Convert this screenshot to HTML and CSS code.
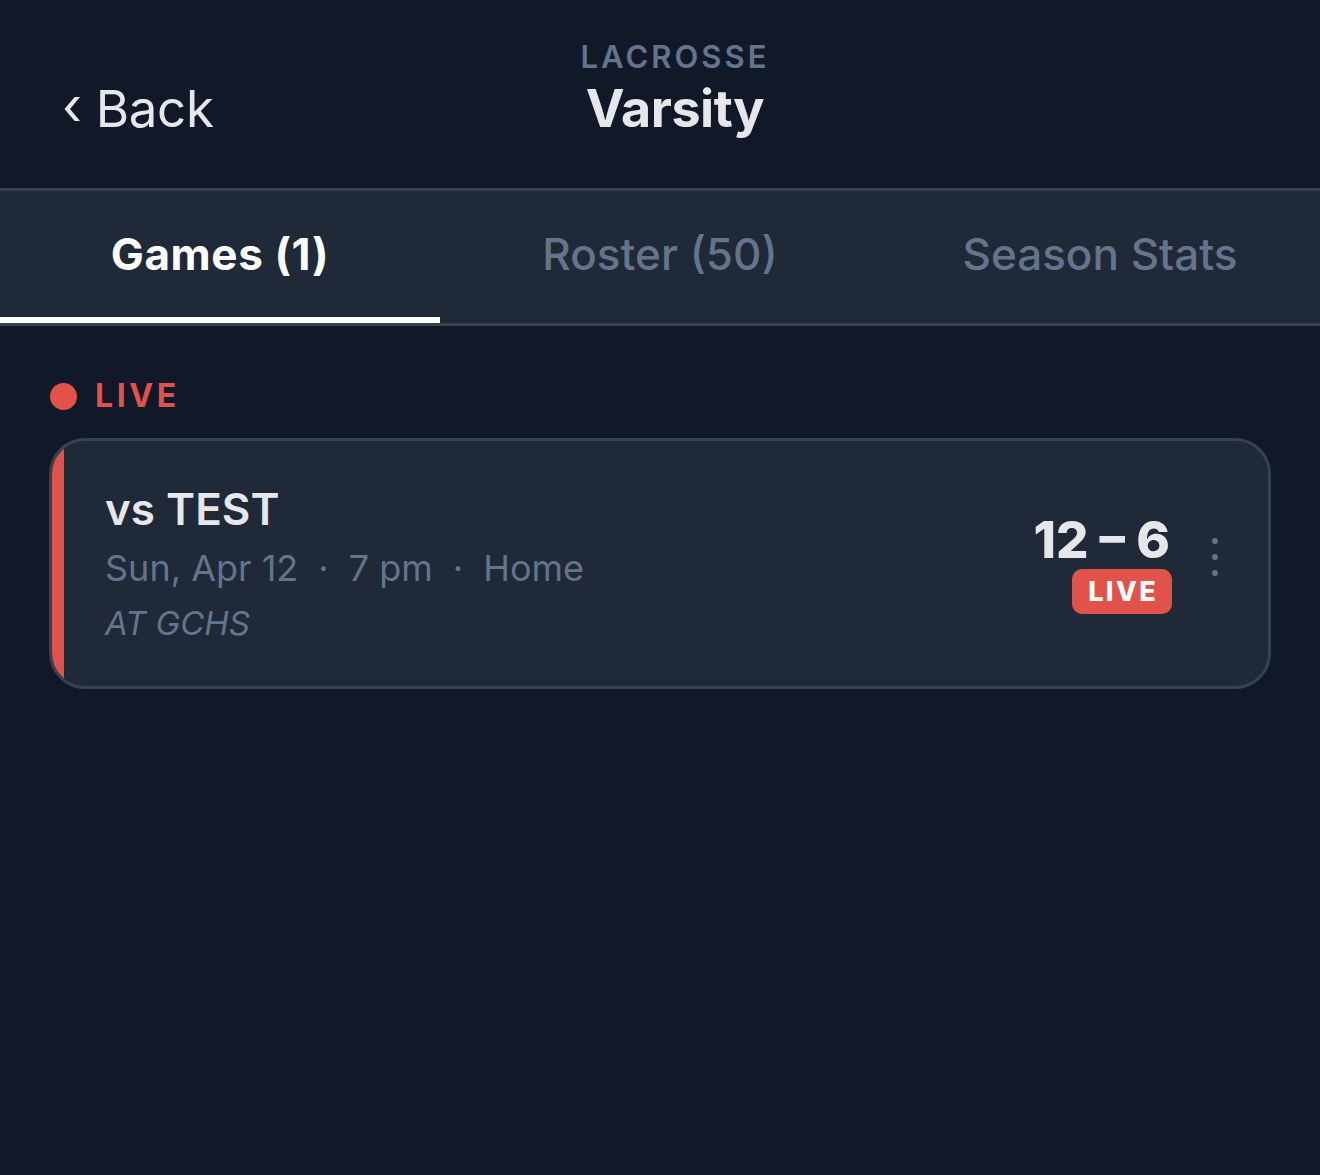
FILE: index.html
```html
<!DOCTYPE html>
<html lang="en">
<head>
<meta charset="utf-8">
<title>Varsity</title>
<link rel="stylesheet" href="styles.css">
</head>
<body>
<div class="app">
  <header class="topbar">
    <a class="back" href="#"><span class="chev">&#8249;</span>Back</a>
    <div class="title">
      <div class="sport">LACROSSE</div>
      <div class="team">Varsity</div>
    </div>
    <div class="spacer"></div>
  </header>
  <nav class="tabs">
    <div class="tab active">Games (1)</div>
    <div class="tab">Roster (50)</div>
    <div class="tab">Season Stats</div>
  </nav>
  <main class="content">
    <div class="section-label"><span class="dot"></span>LIVE</div>
    <div class="card">
      <div class="stripe"></div>
      <div class="card-body">
        <div class="info">
          <div class="opponent">vs TEST</div>
          <div class="meta">Sun, Apr 12<span class="sep">·</span>7 pm<span class="sep">·</span>Home</div>
          <div class="venue">AT GCHS</div>
        </div>
        <div class="result">
          <div class="score">12 – 6</div>
          <div class="badge">LIVE</div>
        </div>
        <div class="more"><span></span><span></span><span></span></div>
      </div>
    </div>
  </main>
</div>
</body>
</html>
```

FILE: styles.css
```css
* { box-sizing: border-box; }
html, body {
  margin: 0;
  padding: 0;
  background: #111827;
  height: 100%;
}
body {
  font-family: Inter, "Noto Sans", sans-serif;
  color: #e5e7eb;
}
.app {
  min-height: 100%;
}
.topbar {
  height: 188px;
  display: grid;
  grid-template-columns: 1fr auto 1fr;
  align-items: start;
  padding: 0 32px 0 62px;
}
.back {
  align-self: start;
  margin-top: 74px;
  color: #e5e7eb;
  text-decoration: none;
  font-size: 51px;
  font-weight: 400;
  display: flex;
  align-items: center;
  line-height: 70px;
  letter-spacing: -0.3px;
}
.chev {
  font-size: 52px;
  margin-right: 14px;
  position: relative;
  top: -2px;
}
.title {
  text-align: center;
  padding-top: 38px;
}
.sport {
  color: #64748b;
  font-size: 31px;
  font-weight: 600;
  letter-spacing: 3px;
  line-height: 38px;
}
.team {
  color: #e5e7eb;
  font-size: 52px;
  font-weight: 700;
  line-height: 66px;
  letter-spacing: -0.5px;
}
.tabs {
  display: grid;
  grid-template-columns: repeat(3, 1fr);
  background: #1f2937;
  border-top: 3px solid #374151;
  border-bottom: 3px solid #374151;
  height: 138px;
}
.tab {
  display: flex;
  align-items: center;
  justify-content: center;
  font-size: 44px;
  font-weight: 500;
  color: #64748b;
  border-bottom: 6px solid transparent;
}
.tab.active {
  color: #ffffff;
  font-weight: 700;
  letter-spacing: 0.6px;
  border-bottom-color: #ffffff;
}
.content {
  padding: 50px 49px 0;
}
.section-label {
  display: flex;
  align-items: center;
  gap: 18px;
  color: #e0524a;
  font-size: 32px;
  font-weight: 700;
  letter-spacing: 3.6px;
  line-height: 40px;
  margin-bottom: 22px;
  padding-left: 1px;
}
.dot {
  width: 27px;
  height: 27px;
  border-radius: 50%;
  background: #e0524a;
}
.card {
  display: flex;
  height: 251px;
  background: #1f2937;
  border: 3px solid #374151;
  border-radius: 36px;
  overflow: hidden;
}
.stripe {
  width: 12px;
  background: #e0524a;
  flex: none;
}
.card-body {
  flex: 1;
  display: flex;
  align-items: center;
  padding: 0 50px 0 41px;
}
.info {
  flex: 1;
  padding-top: 2px;
}
.opponent {
  font-size: 44px;
  font-weight: 600;
  color: #e5e7eb;
  line-height: 56px;
  margin-bottom: 2px;
}
.meta {
  font-size: 36px;
  color: #64748b;
  line-height: 58px;
}
.sep {
  margin: 0 20px;
}
.venue {
  font-size: 33px;
  font-style: italic;
  color: #64748b;
  line-height: 52px;
}
.result {
  display: flex;
  flex-direction: column;
  align-items: flex-end;
  margin-right: 40px;
}
.score {
  font-size: 51px;
  font-weight: 800;
  color: #e5e7eb;
  line-height: 54px;
  padding-right: 2px;
}
.badge {
  background: #e0524a;
  color: #ffffff;
  font-size: 27px;
  font-weight: 800;
  letter-spacing: 2.4px;
  border-radius: 10px;
  padding: 0 14px 0 16px;
  line-height: 45px;
  height: 45px;
  margin-top: 2px;
}
.more {
  display: flex;
  flex-direction: column;
  gap: 10px;
  margin-bottom: 14px;
}
.more span {
  width: 6px;
  height: 6px;
  border-radius: 50%;
  background: #6b7280;
}
```
